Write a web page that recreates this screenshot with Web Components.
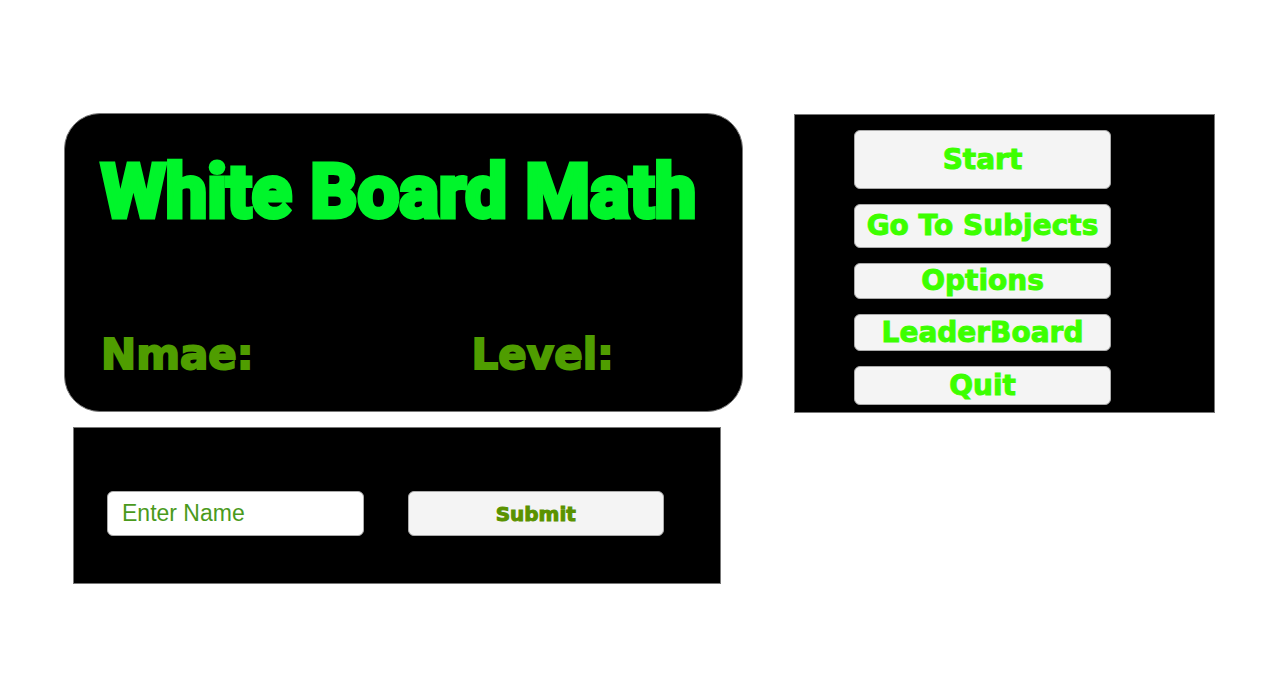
<!DOCTYPE html>
<html lang="en">
<head>
<meta charset="utf-8">
<title>White Board Math</title>
<style>
  body {
    margin: 0;
    background: #fff;
    font-family: "DejaVu Sans", sans-serif;
  }
</style>
</head>
<body>
<math-home>
  <score-card slot="main" heading="White Board Math">
    <player-stat>Nmae:</player-stat>
    <player-stat>Level:</player-stat>
  </score-card>
  <name-form slot="main"></name-form>
  <main-menu slot="side">
    <menu-button style="flex-grow: 59">Start</menu-button>
    <menu-button style="flex-grow: 44">Go To Subjects</menu-button>
    <menu-button style="flex-grow: 36">Options</menu-button>
    <menu-button style="flex-grow: 37">LeaderBoard</menu-button>
    <menu-button style="flex-grow: 39">Quit</menu-button>
  </main-menu>
</math-home>

<script>
class MathHome extends HTMLElement {
  constructor() {
    super();
    this.attachShadow({ mode: "open" });
    this.shadowRoot.innerHTML = `
      <style>
        :host {
          display: grid;
          grid-template-columns: minmax(0, 679fr) minmax(0, 421fr);
          column-gap: 51px;
          align-items: start;
          padding: 113px 65px 0 64px;
        }
        .main {
          display: flex;
          flex-direction: column;
          gap: 15px;
        }
      </style>
      <div class="main"><slot name="main"></slot></div>
      <slot name="side"></slot>
    `;
  }
}

class ScoreCard extends HTMLElement {
  constructor() {
    super();
    this.attachShadow({ mode: "open" });
    this.shadowRoot.innerHTML = `
      <style>
        :host {
          display: flex;
          flex-direction: column;
          justify-content: space-between;
          box-sizing: border-box;
          min-height: 299px;
          padding: 28px 36px 32px;
          border: 1px solid #777;
          border-radius: 36px;
          background: #000;
        }
        h1 {
          margin: 0;
          color: #00f52b;
          font: bold 74px/100px Roboto, "Liberation Sans", sans-serif;
          -webkit-text-stroke: 5px #00f52b;
          stroke-linejoin: round;
          text-shadow: 0 0 2px #00f52b;
          white-space: nowrap;
        }
        .stats {
          display: grid;
          grid-template-columns: 370fr 234fr;
        }
      </style>
      <h1></h1>
      <div class="stats"><slot></slot></div>
    `;
    this.shadowRoot.querySelector("h1").textContent = this.getAttribute("heading");
  }
}

class PlayerStat extends HTMLElement {
  constructor() {
    super();
    this.attachShadow({ mode: "open" });
    this.shadowRoot.innerHTML = `
      <style>
        :host {
          display: block;
          color: #4f9d00;
          font-size: 42px;
          font-weight: bold;
          line-height: 48px;
          -webkit-text-stroke: 2px #4f9d00;
        }
      </style>
      <slot></slot>
    `;
  }
}

class NameForm extends HTMLElement {
  constructor() {
    super();
    this.attachShadow({ mode: "open" });
    this.shadowRoot.innerHTML = `
      <style>
        :host {
          display: block;
          margin: 0 22px 0 9px;
          border: 1px solid #777;
          background: #000;
        }
        form {
          display: grid;
          grid-template-columns: 1fr 1fr;
          gap: 44px;
          margin: 0;
          padding: 63px 56px 47px 33px;
        }
        input, button {
          box-sizing: border-box;
          width: 100%;
          height: 45px;
          margin: 0;
          border: 1px solid #aaa;
          border-radius: 6px;
        }
        input {
          padding: 0 14px;
          background: #fff;
          color: #4a9a1c;
          font: 23px "Liberation Sans", sans-serif;
        }
        input::placeholder {
          color: #4a9a1c;
          opacity: 1;
        }
        button {
          background: #f4f4f4;
          color: #5a9200;
          font: bold 20px "DejaVu Sans", sans-serif;
          -webkit-text-stroke: 1px #5a9200;
        }
      </style>
      <form>
        <input type="text" placeholder="Enter Name" aria-label="Enter Name">
        <button type="submit">Submit</button>
      </form>
    `;
    this.shadowRoot.querySelector("form").addEventListener("submit", (e) => e.preventDefault());
  }
}

class MainMenu extends HTMLElement {
  constructor() {
    super();
    this.attachShadow({ mode: "open" });
    this.shadowRoot.innerHTML = `
      <style>
        :host {
          display: block;
          margin-top: 1px;
          border: 1px solid #777;
          background: #000;
        }
        nav {
          display: flex;
          flex-direction: column;
          gap: 15px;
          box-sizing: border-box;
          min-height: 297px;
          padding: 15px 103px 7px 59px;
        }
      </style>
      <nav><slot></slot></nav>
    `;
  }
}

class MenuButton extends HTMLElement {
  constructor() {
    super();
    this.attachShadow({ mode: "open" });
    this.shadowRoot.innerHTML = `
      <style>
        :host {
          display: flex;
          flex-basis: 0;
        }
        button {
          width: 100%;
          padding: 0;
          border: 1px solid #aaa;
          border-radius: 6px;
          background: #f4f4f4;
          color: #3cff00;
          font: bold 28px/32px "DejaVu Sans", sans-serif;
          -webkit-text-stroke: 1px #3cff00;
          white-space: nowrap;
        }
      </style>
      <button type="button"><slot></slot></button>
    `;
  }
}

customElements.define("math-home", MathHome);
customElements.define("score-card", ScoreCard);
customElements.define("player-stat", PlayerStat);
customElements.define("name-form", NameForm);
customElements.define("main-menu", MainMenu);
customElements.define("menu-button", MenuButton);
</script>
</body>
</html>
